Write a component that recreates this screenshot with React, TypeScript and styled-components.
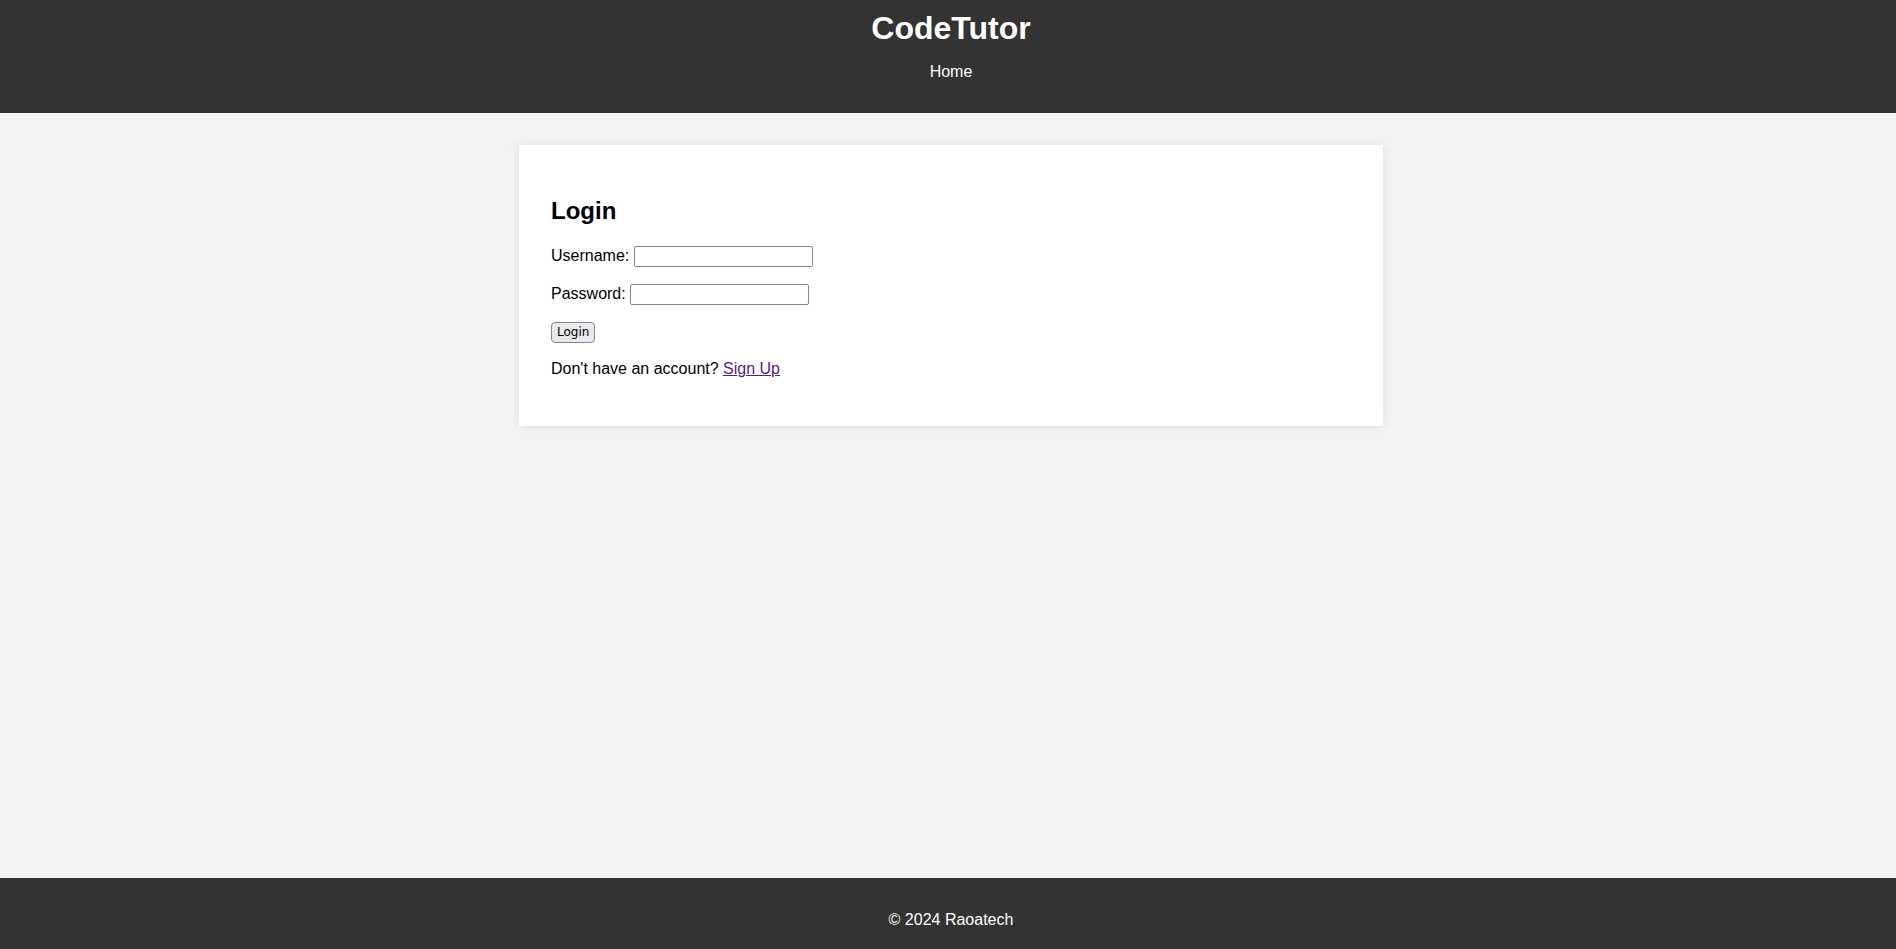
import React from "react";
import styled, { createGlobalStyle } from "styled-components";

const GlobalStyle = createGlobalStyle`
  html, body {
    margin: 0;
    padding: 0;
  }
  body {
    font-family: "Liberation Sans", Arial, sans-serif;
    background: #f4f4f4;
    color: #000;
  }
`;

const Page = styled.div`
  min-height: 100vh;
  display: flex;
  flex-direction: column;
`;

const Header = styled.header`
  background: #333333;
  color: #ffffff;
  text-align: center;
  height: 113px;
  box-sizing: border-box;
  padding: 10px 0 0 6px;
`;

const Title = styled.h1`
  margin: 0;
  font-size: 32px;
  font-weight: bold;
`;

const Nav = styled.nav`
  margin-top: 16px;
  font-size: 16px;
`;

const NavLink = styled.a`
  color: #ffffff;
  text-decoration: none;
`;

const Main = styled.main`
  flex: 1;
  padding: 32px 0 32px 6px;
`;

const Card = styled.section`
  max-width: 800px;
  margin: 0 auto;
  padding: 32px;
  background: #ffffff;
  box-shadow: 0 0 10px rgba(0, 0, 0, 0.1);
`;

const Heading = styled.h2`
  font-size: 24px;
  font-weight: bold;
  margin: 20px 0;
`;

const Form = styled.form`
  margin: 0;
`;

const Row = styled.div`
  display: flex;
  align-items: flex-start;
  gap: 4.5px;
  height: 22px;
  margin: 16px 0;
  font-size: 16px;
`;

const Label = styled.label`
  margin-top: 1.5px;
  line-height: 18.4px;
`;

const Field = styled.input`
  box-sizing: border-box;
  width: 179px;
  height: 21px;
  margin: 1px 0 0;
  padding: 1px 2px;
  border: 1px solid #858593;
  border-radius: 2px;
  background: #ffffff;
  font-family: "Liberation Sans", Arial, sans-serif;
  font-size: 13.33px;
`;

const SubmitButton = styled.button`
  box-sizing: border-box;
  height: 21px;
  margin: 1px 0 0;
  padding: 0 5px;
  border: 1px solid #858593;
  border-radius: 4px;
  background: #e9e9ed;
  color: #000000;
  font-family: "DejaVu Sans", sans-serif;
  font-size: 12px;
  line-height: 19px;
`;

const Note = styled.p`
  margin: 17px 0 16px;
  font-size: 16px;
`;

const SignUpLink = styled.a`
  color: #551a8b;
  text-decoration: underline;
`;

const Footer = styled.footer`
  background: #333333;
  color: #ffffff;
  text-align: center;
  height: 71px;
  box-sizing: border-box;
  padding: 33px 0 0 6px;
  font-size: 16px;
`;

export default function App() {
  return (
    <>
      <GlobalStyle />
      <Page>
        <Header>
          <Title>CodeTutor</Title>
          <Nav>
            <NavLink href="#">Home</NavLink>
          </Nav>
        </Header>
        <Main>
          <Card>
            <Heading>Login</Heading>
            <Form onSubmit={(e) => e.preventDefault()}>
              <Row>
                <Label htmlFor="username">Username:</Label>
                <Field type="text" id="username" />
              </Row>
              <Row>
                <Label htmlFor="password">Password:</Label>
                <Field type="password" id="password" />
              </Row>
              <Row>
                <SubmitButton type="submit">Login</SubmitButton>
              </Row>
            </Form>
            <Note>
              Don't have an account? <SignUpLink href="#">Sign Up</SignUpLink>
            </Note>
          </Card>
        </Main>
        <Footer>© 2024 Raoatech</Footer>
      </Page>
    </>
  );
}
